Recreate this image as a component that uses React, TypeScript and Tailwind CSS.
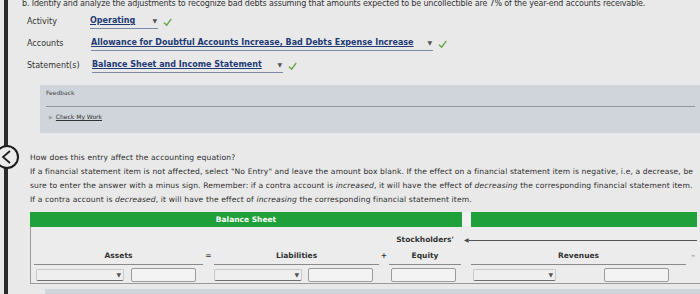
import React from "react";

const Check = () => (
  <svg width="9" height="9" viewBox="0 0 10 10" className="ml-[5px] shrink-0">
    <polyline points="1.5,5.5 4,8 8.8,1.5" fill="none" stroke="#6aa84f" strokeWidth="1.6" strokeLinecap="round" strokeLinejoin="round" />
  </svg>
);

const Caret = ({ className = "" }: { className?: string }) => (
  <span className={`text-[6px] leading-none text-[#555] ${className}`}>▼</span>
);

interface AnswerSelectProps {
  value: string;
  width: string;
}

function AnswerSelect({ value, width }: AnswerSelectProps) {
  return (
    <div className="flex items-center">
      <div className={`${width} flex items-center justify-between border-b border-[#7d8aa3] pb-[1px]`}>
        <span className="text-[8px] font-bold text-[#1f3a74] underline underline-offset-[1px] whitespace-nowrap">{value}</span>
        <Caret className="mr-[1px]" />
      </div>
      <Check />
    </div>
  );
}

const EmptySelect = ({ width }: { width: string }) => (
  <div className={`${width} h-[12px] flex items-center justify-end rounded-[2px] border border-[#c8c8c8] border-b-[#6f6f6f] bg-[#efefef] pr-[2px]`}>
    <Caret />
  </div>
);

const AmountBox = () => (
  <div className="w-[65px] h-[14px] rounded-[2px] border border-[#9a9a9a] bg-[#f3f3f3]" />
);

export default function App() {
  return (
    <div className="w-[700px] h-[294px] overflow-hidden relative bg-[#e9e9e9] text-[#333] font-['DejaVu_Sans',sans-serif]">
      {/* photo frame edge + back button overlay */}
      <div className="absolute left-[4px] top-0 bottom-0 w-[4px] bg-[#2b2b2b]" />
      <div className="absolute left-[-5px] top-[145px] w-[24px] h-[24px] rounded-full border-2 border-[#1e1e1e] bg-[#ececec] flex items-center justify-center">
        <svg width="12" height="14" viewBox="0 0 12 14">
          <polyline points="9,1 2,7 9,13" fill="none" stroke="#1e1e1e" strokeWidth="1.8" />
        </svg>
      </div>

      <div className="pl-[22px]">
        <p className="-mt-[1px] h-[10px] text-[8px] leading-[10px] tracking-[-0.15px] whitespace-nowrap">
          b. Identify and analyze the adjustments to recognize bad debts assuming that amounts expected to be uncollectible are 7% of the year-end accounts receivable.
        </p>

        <div className="pl-[5px] mt-[2px]">
          <div className="flex items-center h-[22px]">
            <span className="w-[63px] text-[8px]">Activity</span>
            <AnswerSelect value="Operating" width="w-[68px]" />
          </div>
          <div className="flex items-center h-[22px]">
            <span className="w-[64px] text-[8px]">Accounts</span>
            <AnswerSelect value="Allowance for Doubtful Accounts Increase, Bad Debts Expense Increase" width="w-[342px]" />
          </div>
          <div className="flex items-center h-[22px]">
            <span className="w-[65px] text-[8px]">Statement(s)</span>
            <AnswerSelect value="Balance Sheet and Income Statement" width="w-[191px]" />
          </div>

          {/* feedback */}
          <div className="ml-[13px] mt-[8px] h-[48px] bg-[#cfd5da] pl-[6px] pr-[5px] pt-[3px]">
            <div className="text-[6px] leading-[10px] text-[#444]">Feedback</div>
            <div className="mt-[8px] border-t border-[#8e979f]" />
            <div className="mt-[5px] ml-[3px] flex items-center gap-[3px] text-[6px] leading-[10px]">
              <span className="text-[5px] text-[#9aa0a6]">▶</span>
              <span className="underline text-[#333]">Check My Work</span>
            </div>
          </div>

          {/* question */}
          <div className="ml-[3px] mt-[18px] text-[7.6px] leading-[14px] tracking-[0.12px] whitespace-nowrap text-[#2e2e2e]">
            <p>How does this entry affect the accounting equation?</p>
            <p>If a financial statement item is not affected, select "No Entry" and leave the amount box blank. If the effect on a financial statement item is negative, i.e, a decrease, be</p>
            <p>
              sure to enter the answer with a minus sign. Remember: if a contra account is <i>increased</i>, it will have the effect of <i>decreasing</i> the corresponding financial statement item.
            </p>
            <p>
              If a contra account is <i>decreased</i>, it will have the effect of <i>increasing</i> the corresponding financial statement item.
            </p>
          </div>

          {/* balance sheet table */}
          <div className="ml-[3px] mt-[5px] w-[670px]">
            <div className="flex h-[15px]">
              <div className="w-[432px] bg-[#20a03a] flex items-center justify-center">
                <span className="text-[7.5px] font-bold text-white">Balance Sheet</span>
              </div>
              <div className="w-[9px] bg-[#f1f1f1]" />
              <div className="w-[226px] bg-[#20a03a]" />
            </div>

            <div className="h-[57px] border-l border-b border-[#9a9a9a] bg-[#ececec] pl-[3px] pt-[6px] grid grid-cols-[169px_11px_165px_10px_72px_10px_215px_14px] grid-rows-[14px_18px_19px] text-[7.5px] font-bold text-[#333]">
              {/* row 1 */}
              <div className="col-start-5 flex items-center justify-center">Stockholders'</div>
              <div className="col-span-3 flex items-center pl-[3px] pr-[3px]">
                <span className="text-[6px] leading-none text-[#444]">◀</span>
                <div className="flex-1 border-t border-[#555]" />
              </div>

              {/* row 2 */}
              <div className="flex items-center justify-center border-b border-[#8a8a8a]">Assets</div>
              <div className="flex items-center justify-center font-normal">=</div>
              <div className="flex items-center justify-center border-b border-[#8a8a8a]">Liabilities</div>
              <div className="flex items-center justify-center">+</div>
              <div className="flex items-center justify-center border-b border-[#8a8a8a]">Equity</div>
              <div />
              <div className="flex items-center justify-center border-b border-[#8a8a8a]">Revenues</div>
              <div className="flex items-center justify-center font-normal">–</div>

              {/* row 3 */}
              <div className="flex items-center pl-[2px] gap-[7px]">
                <EmptySelect width="w-[88px]" />
                <AmountBox />
              </div>
              <div />
              <div className="flex items-center gap-[6px]">
                <EmptySelect width="w-[88px]" />
                <AmountBox />
              </div>
              <div />
              <div className="flex items-center pl-[2px]">
                <AmountBox />
              </div>
              <div />
              <div className="flex items-center pl-[2px] gap-[48px]">
                <EmptySelect width="w-[83px]" />
                <AmountBox />
              </div>
              <div />
            </div>

            <div className="ml-[15px] mt-[5px] h-[20px] bg-[#cfd5da]" />
          </div>
        </div>
      </div>
    </div>
  );
}
